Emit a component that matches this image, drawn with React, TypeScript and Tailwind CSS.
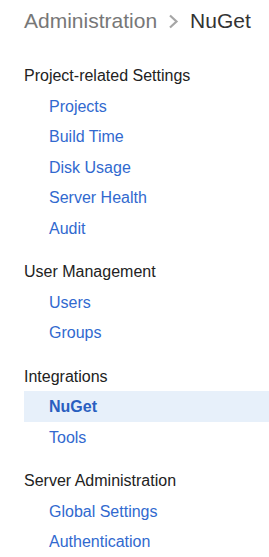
import React from "react";

type Section = { title: string; items: { label: string; active?: boolean }[] };

const sections: Section[] = [
  {
    title: "Project-related Settings",
    items: [
      { label: "Projects" },
      { label: "Build Time" },
      { label: "Disk Usage" },
      { label: "Server Health" },
      { label: "Audit" },
    ],
  },
  {
    title: "User Management",
    items: [{ label: "Users" }, { label: "Groups" }],
  },
  {
    title: "Integrations",
    items: [{ label: "NuGet", active: true }, { label: "Tools" }],
  },
  {
    title: "Server Administration",
    items: [{ label: "Global Settings" }, { label: "Authentication" }],
  },
];

export default function App() {
  return (
    <div className="w-[269px] h-[557px] overflow-hidden bg-white pl-6 font-['Liberation_Sans',Arial,sans-serif]">
      <div className="pt-[9px] flex items-center text-[21px] leading-[24px] whitespace-nowrap">
        <span className="text-[#777777]">Administration</span>
        <svg
          className="mx-[11px]"
          width="11"
          height="15"
          viewBox="0 0 11 15"
          fill="none"
        >
          <path d="M2 1.5 L8.5 7.5 L2 13.5" stroke="#a6a6a6" strokeWidth="2.2" />
        </svg>
        <span className="text-[#333333]">NuGet</span>
      </div>
      <div className="mt-[27px] flex flex-col gap-[13px]">
        {sections.map((s) => (
          <div key={s.title} className="flex flex-col">
            <div className="h-[30.5px] pt-px text-[16px] leading-[30px] text-[#222222] whitespace-nowrap">
              {s.title}
            </div>
            {s.items.map((it) => (
              <div
                key={it.label}
                className={
                  it.active
                    ? "h-[30.5px] pt-px pl-[25px] text-[16px] leading-[30px] whitespace-nowrap bg-[#e7f0fa] font-bold text-[#2a5fc0]"
                    : "h-[30.5px] pt-px pl-[25px] text-[16px] leading-[30px] whitespace-nowrap text-[#3169cf]"
                }
              >
                {it.label}
              </div>
            ))}
          </div>
        ))}
      </div>
    </div>
  );
}
